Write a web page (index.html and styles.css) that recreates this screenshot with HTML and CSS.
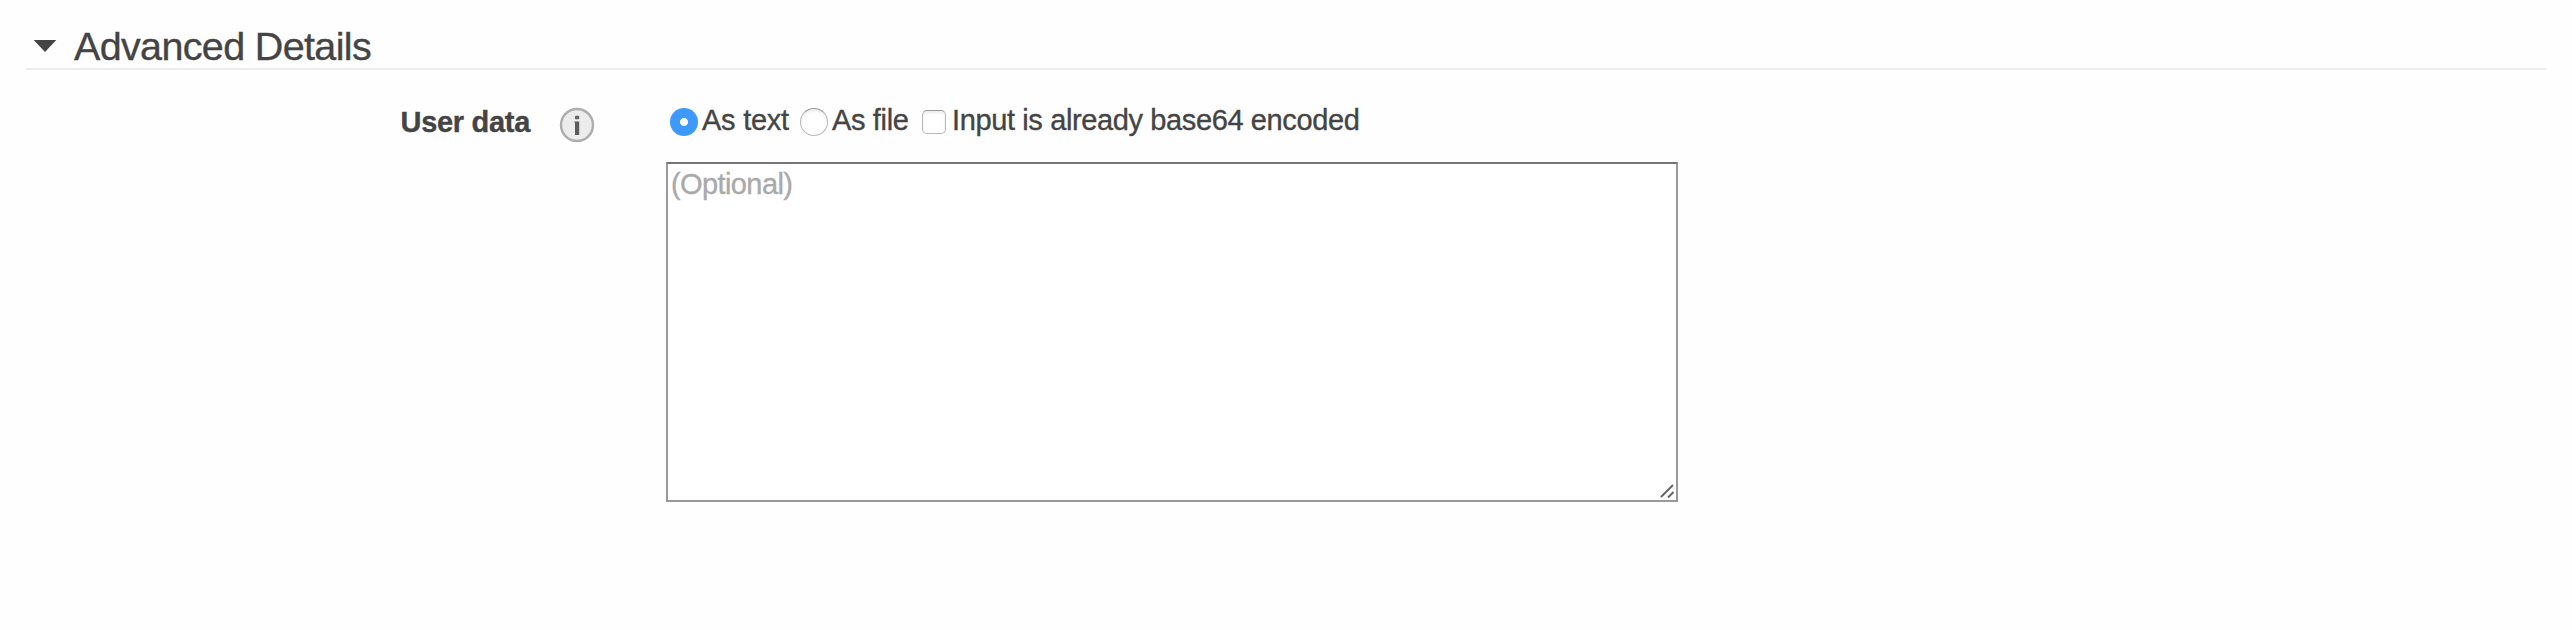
FILE: index.html
```html
<!DOCTYPE html>
<html lang="en">
<head>
<meta charset="utf-8">
<title>Advanced Details</title>
<link rel="stylesheet" href="styles.css">
</head>
<body>
<section class="panel">
  <header class="panel-header">
    <svg class="caret" width="24" height="14" viewBox="0 0 24 14"><path d="M.7 1H23.3L12 13Z" fill="#444"/></svg>
    <h2 class="title">Advanced Details</h2>
  </header>
  <div class="row">
    <div class="label">User data</div>
    <svg class="info" width="36" height="36" viewBox="0 0 36 36">
      <circle cx="18" cy="18" r="16" fill="#ececec" stroke="#adadad" stroke-width="2.4"/>
      <rect x="16" y="8.8" width="4.2" height="3.4" rx=".8" fill="#666"/>
      <path d="M15.4 14.4H20.2V28H16V15.8H15.4Z" fill="#5c5c5c"/>
    </svg>
    <div class="field">
      <div class="options">
        <input class="radio" type="radio" name="mode" id="text" checked><label class="option as-text" for="text">As text</label>
        <input class="radio" type="radio" name="mode" id="file"><label class="option as-file" for="file">As file</label>
        <input class="check" type="checkbox" id="encoded"><label class="option encoded" for="encoded">Input is already base64 encoded</label>
      </div>
      <div class="editor">
        <textarea class="data" placeholder="(Optional)"></textarea>
        <svg class="grip" width="14" height="14" viewBox="0 0 14 14"><path d="M1 13L13 1M8 13.5L13.5 8" stroke="#666" stroke-width="2" fill="none"/></svg>
      </div>
    </div>
  </div>
</section>
</body>
</html>
```
FILE: styles.css
```css
* { box-sizing: border-box; }
body {
  margin: 0;
  background: #fefefe;
  color: #444;
  font: 29px/32px "Liberation Sans", Arial, sans-serif;
  -webkit-text-stroke: .35px;
}
.panel { padding: 24px 26px 0; }
.panel-header {
  display: flex;
  height: 46px;
  padding-left: 7px;
  border-bottom: 2px solid #ebebeb;
}
.caret { margin: 15px 17px 0 0; }
.title {
  margin: 0;
  font-size: 39.5px;
  font-weight: 400;
  line-height: 44px;
  letter-spacing: -.65px;
}
.row { display: flex; align-items: flex-start; }
.label {
  width: 504px;
  padding-top: 36px;
  text-align: right;
  font-weight: 700;
  letter-spacing: -.3px;
}
.info { margin: 37px 0 0 29px; }
.field { margin: 34px 0 0 71px; }
.options {
  display: flex;
  height: 58px;
  padding-left: 4px;
}
.radio, .check { appearance: none; margin: 0; background: #fff; }
.radio {
  width: 28px;
  height: 28px;
  margin-top: 4px;
  border: 1.5px solid #b8b8b8;
  border-top-color: #999;
  border-radius: 50%;
  box-shadow: inset 0 2px 3px #ececec;
}
.radio:checked {
  border: 0;
  background: radial-gradient(circle, #fff 3.6px, #3d99fb 4.4px);
  box-shadow: none;
}
.check {
  width: 24px;
  height: 24px;
  margin-top: 6px;
  border: 1.5px solid #b8b8b8;
  border-top-color: #999;
  border-radius: 5px;
  box-shadow: inset 0 2px 3px #ececec;
}
.option { padding-left: 4px; white-space: nowrap; letter-spacing: -.25px; }
.as-text { width: 102px; }
.as-file { width: 94px; letter-spacing: -.35px; }
.encoded { padding-left: 6px; letter-spacing: -.38px; }
.editor { position: relative; width: 1012px; height: 340px; }
.data {
  display: block;
  width: 100%;
  height: 100%;
  padding: 4px 3px;
  border: 2px solid #999;
  border-top-color: #757575;
  background: #fff;
  color: #444;
  font: inherit;
  letter-spacing: -.6px;
  resize: none;
}
.data::placeholder { color: #a9a9a9; opacity: 1; }
.grip { position: absolute; right: 4px; bottom: 4px; }
```
